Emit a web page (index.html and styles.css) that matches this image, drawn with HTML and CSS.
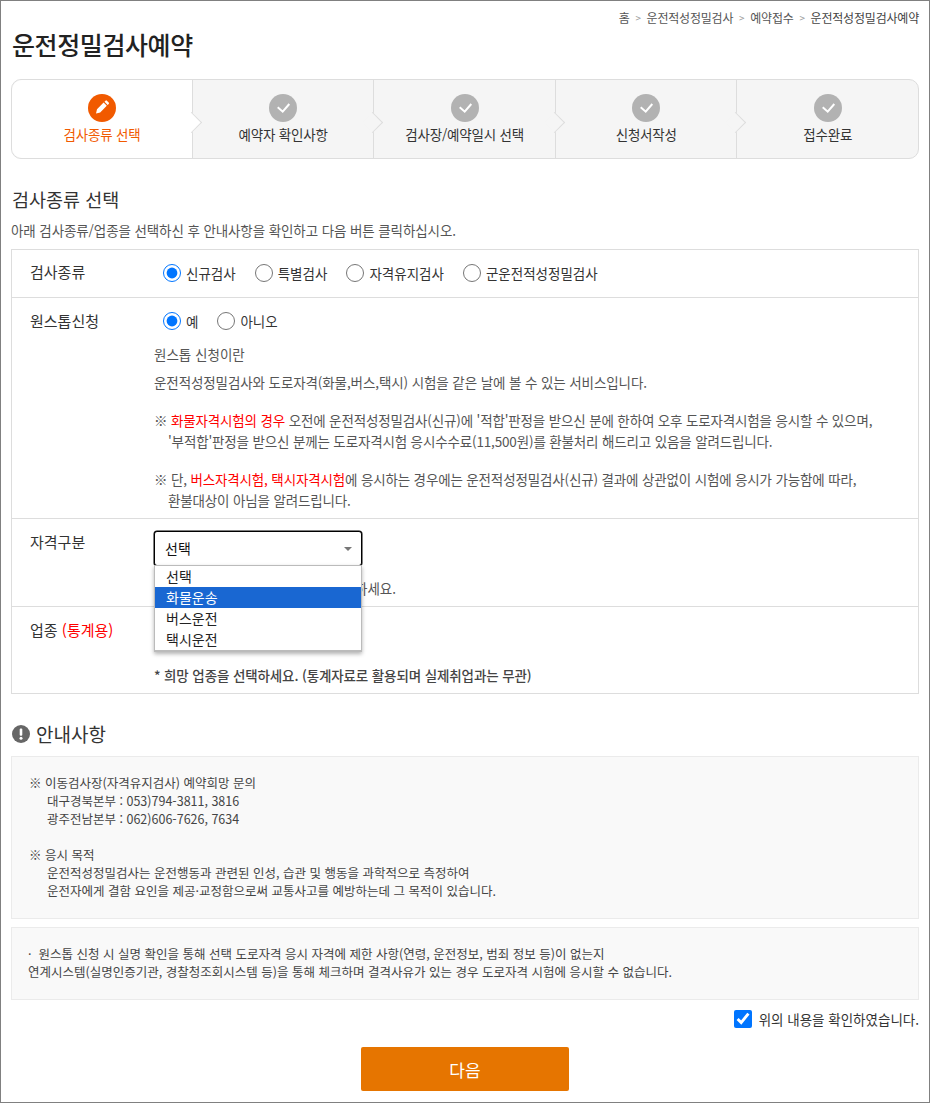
FILE: index.html
```html
<!DOCTYPE html>
<html lang="ko">
<head>
<meta charset="utf-8">
<title>운전정밀검사예약</title>
<link rel="stylesheet" href="styles.css">
</head>
<body>
<div class="frame">
  <nav class="crumbs">
    <span>홈</span><i>&gt;</i><span>운전적성정밀검사</span><i>&gt;</i><span>예약접수</span><i>&gt;</i><span class="cur">운전적성정밀검사예약</span>
  </nav>
  <h1 class="title">운전정밀검사예약</h1>

  <ol class="steps">
    <li class="step on">
      <span class="dot"><svg viewBox="0 0 28 28" width="28" height="28"><path d="M8 19.4l1-4.2 6.6-6.6 3.2 3.2-6.6 6.6zM16.5 7.7l1-1a1 1 0 0 1 1.4 0l1.8 1.8a1 1 0 0 1 0 1.4l-1 1z" fill="#fff"/></svg></span>
      <span class="lbl">검사종류 선택</span>
    </li>
    <li class="step">
      <span class="dot"><svg viewBox="0 0 28 28" width="28" height="28"><path d="M8.7 13.3l5 4.4 6.6-7.7" fill="none" stroke="#fff" stroke-width="2"/></svg></span>
      <span class="lbl">예약자 확인사항</span>
    </li>
    <li class="step">
      <span class="dot"><svg viewBox="0 0 28 28" width="28" height="28"><path d="M8.7 13.3l5 4.4 6.6-7.7" fill="none" stroke="#fff" stroke-width="2"/></svg></span>
      <span class="lbl">검사장/예약일시 선택</span>
    </li>
    <li class="step">
      <span class="dot"><svg viewBox="0 0 28 28" width="28" height="28"><path d="M8.7 13.3l5 4.4 6.6-7.7" fill="none" stroke="#fff" stroke-width="2"/></svg></span>
      <span class="lbl">신청서작성</span>
    </li>
    <li class="step">
      <span class="dot"><svg viewBox="0 0 28 28" width="28" height="28"><path d="M8.7 13.3l5 4.4 6.6-7.7" fill="none" stroke="#fff" stroke-width="2"/></svg></span>
      <span class="lbl">접수완료</span>
    </li>
  </ol>

  <h2 class="sub">검사종류 선택</h2>
  <p class="desc">아래 검사종류/업종을 선택하신 후 안내사항을 확인하고 다음 버튼 클릭하십시오.</p>

  <div class="table">
    <div class="row r1">
      <div class="th">검사종류</div>
      <div class="td radios">
        <label><input type="radio" name="a" checked>신규검사</label>
        <label><input type="radio" name="a">특별검사</label>
        <label><input type="radio" name="a">자격유지검사</label>
        <label><input type="radio" name="a">군운전적성정밀검사</label>
      </div>
    </div>
    <div class="row r2">
      <div class="th">원스톱신청</div>
      <div class="td">
        <div class="radios short">
          <label><input type="radio" name="b" checked>예</label>
          <label><input type="radio" name="b">아니오</label>
        </div>
        <p class="l1">원스톱 신청이란</p>
        <p class="l2">운전적성정밀검사와 도로자격(화물,버스,택시) 시험을 같은 날에 볼 수 있는 서비스입니다.</p>
        <p class="note">※ <b>화물자격시험의 경우</b> 오전에 운전적성정밀검사(신규)에 '적합'판정을 받으신 분에 한하여 오후 도로자격시험을 응시할 수 있으며,<br><span class="ind">'부적합'판정을 받으신 분께는 도로자격시험 응시수수료(11,500원)를 환불처리 해드리고 있음을 알려드립니다.</span></p>
        <p class="note">※ 단, <b>버스자격시험, 택시자격시험</b>에 응시하는 경우에는 운전적성정밀검사(신규) 결과에 상관없이 시험에 응시가 가능함에 따라,<br><span class="ind">환불대상이 아님을 알려드립니다.</span></p>
      </div>
    </div>
    <div class="row r3">
      <div class="th">자격구분</div>
      <div class="td">
        <div class="select focus">선택<i class="arrow"></i></div>
        <p class="hint tail">하세요.</p>
        <ul class="popup">
          <li>선택</li>
          <li class="sel">화물운송</li>
          <li>버스운전</li>
          <li>택시운전</li>
        </ul>
      </div>
    </div>
    <div class="row r4">
      <div class="th">업종 <em>(통계용)</em></div>
      <div class="td">
        <div class="select under"></div>
        <p class="hint strong">* 희망 업종을 선택하세요. (통계자료로 활용되며 실제취업과는 무관)</p>
      </div>
    </div>
  </div>

  <h2 class="guide"><svg viewBox="0 0 18 18" width="18" height="18"><circle cx="9" cy="9" r="9" fill="#666"/><rect x="7.7" y="3.6" width="2.6" height="7.2" rx="1" fill="#fff"/><circle cx="9" cy="13.2" r="1.5" fill="#fff"/></svg>안내사항</h2>

  <div class="box b1">
    <p>※ 이동검사장(자격유지검사) 예약희망 문의<br><span class="ind2">대구경북본부 : 053)794-3811, 3816</span><br><span class="ind2">광주전남본부 : 062)606-7626, 7634</span></p>
    <p class="gap">※ 응시 목적<br><span class="ind2">운전적성정밀검사는 운전행동과 관련된 인성, 습관 및 행동을 과학적으로 측정하여</span><br><span class="ind2">운전자에게 결함 요인을 제공·교정함으로써 교통사고를 예방하는데 그 목적이 있습니다.</span></p>
  </div>
  <div class="box b2">
    <p>· &nbsp;원스톱 신청 시 실명 확인을 통해 선택 도로자격 응시 자격에 제한 사항(연령, 운전정보, 범죄 정보 등)이 없는지<br>연계시스템(실명인증기관, 경찰청조회시스템 등)을 통해 체크하며 결격사유가 있는 경우 도로자격 시험에 응시할 수 없습니다.</p>
  </div>

  <label class="agree"><input type="checkbox" checked>위의 내용을 확인하였습니다.</label>
  <div class="actions"><button class="next" type="button">다음</button></div>
</div>
</body>
</html>
```
FILE: styles.css
```css
* { box-sizing: border-box; }
html, body { margin: 0; padding: 0; background: #fff; }
body { font-family: "Noto Sans CJK KR", "Noto Sans", sans-serif; color: #333; font-size: 13px; }
p, ul, ol, h1, h2 { margin: 0; padding: 0; font-weight: normal; }
ul, ol { list-style: none; }
.frame { width: 930px; height: 1103px; border: 1px solid #808080; padding: 0 10px; position: relative; overflow: hidden; }

.crumbs { height: 33px; display: flex; justify-content: flex-end; align-items: center; font-size: 12px; letter-spacing: -0.2px; color: #555; gap: 5.8px; }
.crumbs i { font-style: normal; color: #999; font-size: 10px; }
.crumbs .cur { color: #444; }
.title { font-size: 25px; line-height: 40px; font-weight: 500; color: #222; letter-spacing: -0.4px; margin: -10px 0 0 1px; height: 53px; }

.steps { display: flex; height: 80px; margin-top: 2px; border: 1px solid #ddd; border-radius: 10px; background: #f5f5f5; }
.step { flex: 1; position: relative; display: flex; flex-direction: column; align-items: center; padding-top: 14px; border-left: 1px solid #ddd; font-size: 13.5px; color: #333; }
.step:first-child { flex: 0 0 179.9px; border-left: 0; background: #fff; border-radius: 10px 0 0 10px; color: #f15a00; }
.step:not(:last-child)::after { content: ""; position: absolute; right: -7px; top: 35px; width: 14px; height: 14px; background: inherit; border-top: 1px solid #ddd; border-right: 1px solid #ddd; transform: rotate(45deg); z-index: 1; }
.step:not(:first-child):not(:last-child)::after { background: #f5f5f5; }
.dot { width: 28px; height: 28px; border-radius: 50%; background: #b2b2b2; display: block; position: relative; z-index: 2; }
.dot svg { display: block; }
.on .dot { background: #f15a00; }
.lbl { margin-top: 1px; line-height: 22px; letter-spacing: -0.2px; position: relative; z-index: 2; }

.sub { font-size: 18.5px; line-height: 28px; margin: 26px 0 0 1px; color: #333; }
.desc { font-size: 13.5px; line-height: 20px; margin-top: 7px; color: #555; letter-spacing: -0.1px; }

.table { border: 1px solid #ddd; margin-top: 9px; height: 445px; }
.row { display: flex; border-top: 1px solid #ddd; }
.row:first-child { border-top: 0; }
.th { width: 142px; padding: 12px 0 0 18px; font-size: 15px; line-height: 22px; color: #333; flex: none; }
.th em { font-style: normal; color: #f00; }
.td { flex: 1; position: relative; font-size: 13.5px; line-height: 20px; color: #555; }
.r1 { height: 47px; }
.r2 { height: 221px; }
.r3 { height: 88px; }
.r4 { height: 87px; }
.r1 .th { padding-top: 11px; }
.radios { display: flex; gap: 19px; padding: 12px 0 0 9px; font-size: 13.5px; color: #333; line-height: 20px; }
.radios label { display: flex; align-items: center; height: 22px; }
.radios input { width: 18px; height: 18px; margin: 0 5px 0 0; accent-color: #0075ff; }
.radios.short { gap: 19px; padding-top: 12px; }
.l1 { margin-top: 12px; }
.l2 { margin-top: 8px; letter-spacing: -0.1px; }
.note { line-height: 20.5px; letter-spacing: -0.15px; }
.l2 + .note { margin-top: 18px; }
.note + .note { margin-top: 18px; }
.note b { font-weight: 400; color: #f00; }
.ind { padding-left: 14px; }

.select { width: 208px; height: 35px; margin-top: 12px; padding: 0 10px; border: 1px solid #bbb; border-radius: 3px; font-size: 14px; line-height: 32px; color: #222; background: #fff; position: relative; }
.select.focus { border-color: #000; box-shadow: 0 0 0 0.5px #000; color: #111; }
.select.under { margin-top: 10px; }
.arrow { position: absolute; right: 9px; top: 15px; border: 4px solid transparent; border-top: 4px solid #777; border-bottom: 0; }
.hint { margin-top: 12px; }
.hint.tail { padding-left: 201px; }
.hint.strong { font-weight: 500; margin-top: 13px; color: #444; letter-spacing: -0.12px; }
.popup { position: absolute; left: 0; top: 46px; width: 208px; height: 87px; background: #fff; border: 1px solid #bbb; border-bottom-width: 2px; box-shadow: 0 2px 4px rgba(0, 0, 0, .3); z-index: 5; font-size: 14px; color: #222; }
.popup li { height: 21px; line-height: 21px; padding-left: 11px; }
.popup .sel { background: #1967d2; color: #fff; }

.guide { display: flex; align-items: center; gap: 6px; font-size: 19px; line-height: 28px; margin: 26px 0 0 1px; color: #333; }
.guide svg { flex: none; }
.box { background: #f9f9f9; border: 1px solid #ebebeb; font-size: 12.5px; color: #444; line-height: 18px; }
.b1 { margin-top: 8px; height: 163px; padding: 17px 17px 0; }
.gap { margin-top: 18px; }
.ind2 { padding-left: 18px; }
.b2 { margin-top: 8px; height: 73px; padding: 17px 16px 0; }
.agree { display: flex; justify-content: flex-end; align-items: center; gap: 7px; font-size: 13.5px; color: #333; margin-top: 8px; height: 22px; }
.agree input { width: 18px; height: 18px; margin: 0; accent-color: #0075ff; }
.actions { display: flex; justify-content: center; margin-top: 17px; }
.next { width: 208px; height: 44px; background: #e67500; border: 0; border-radius: 2px; color: #fff; font: inherit; font-size: 17px; }
```
